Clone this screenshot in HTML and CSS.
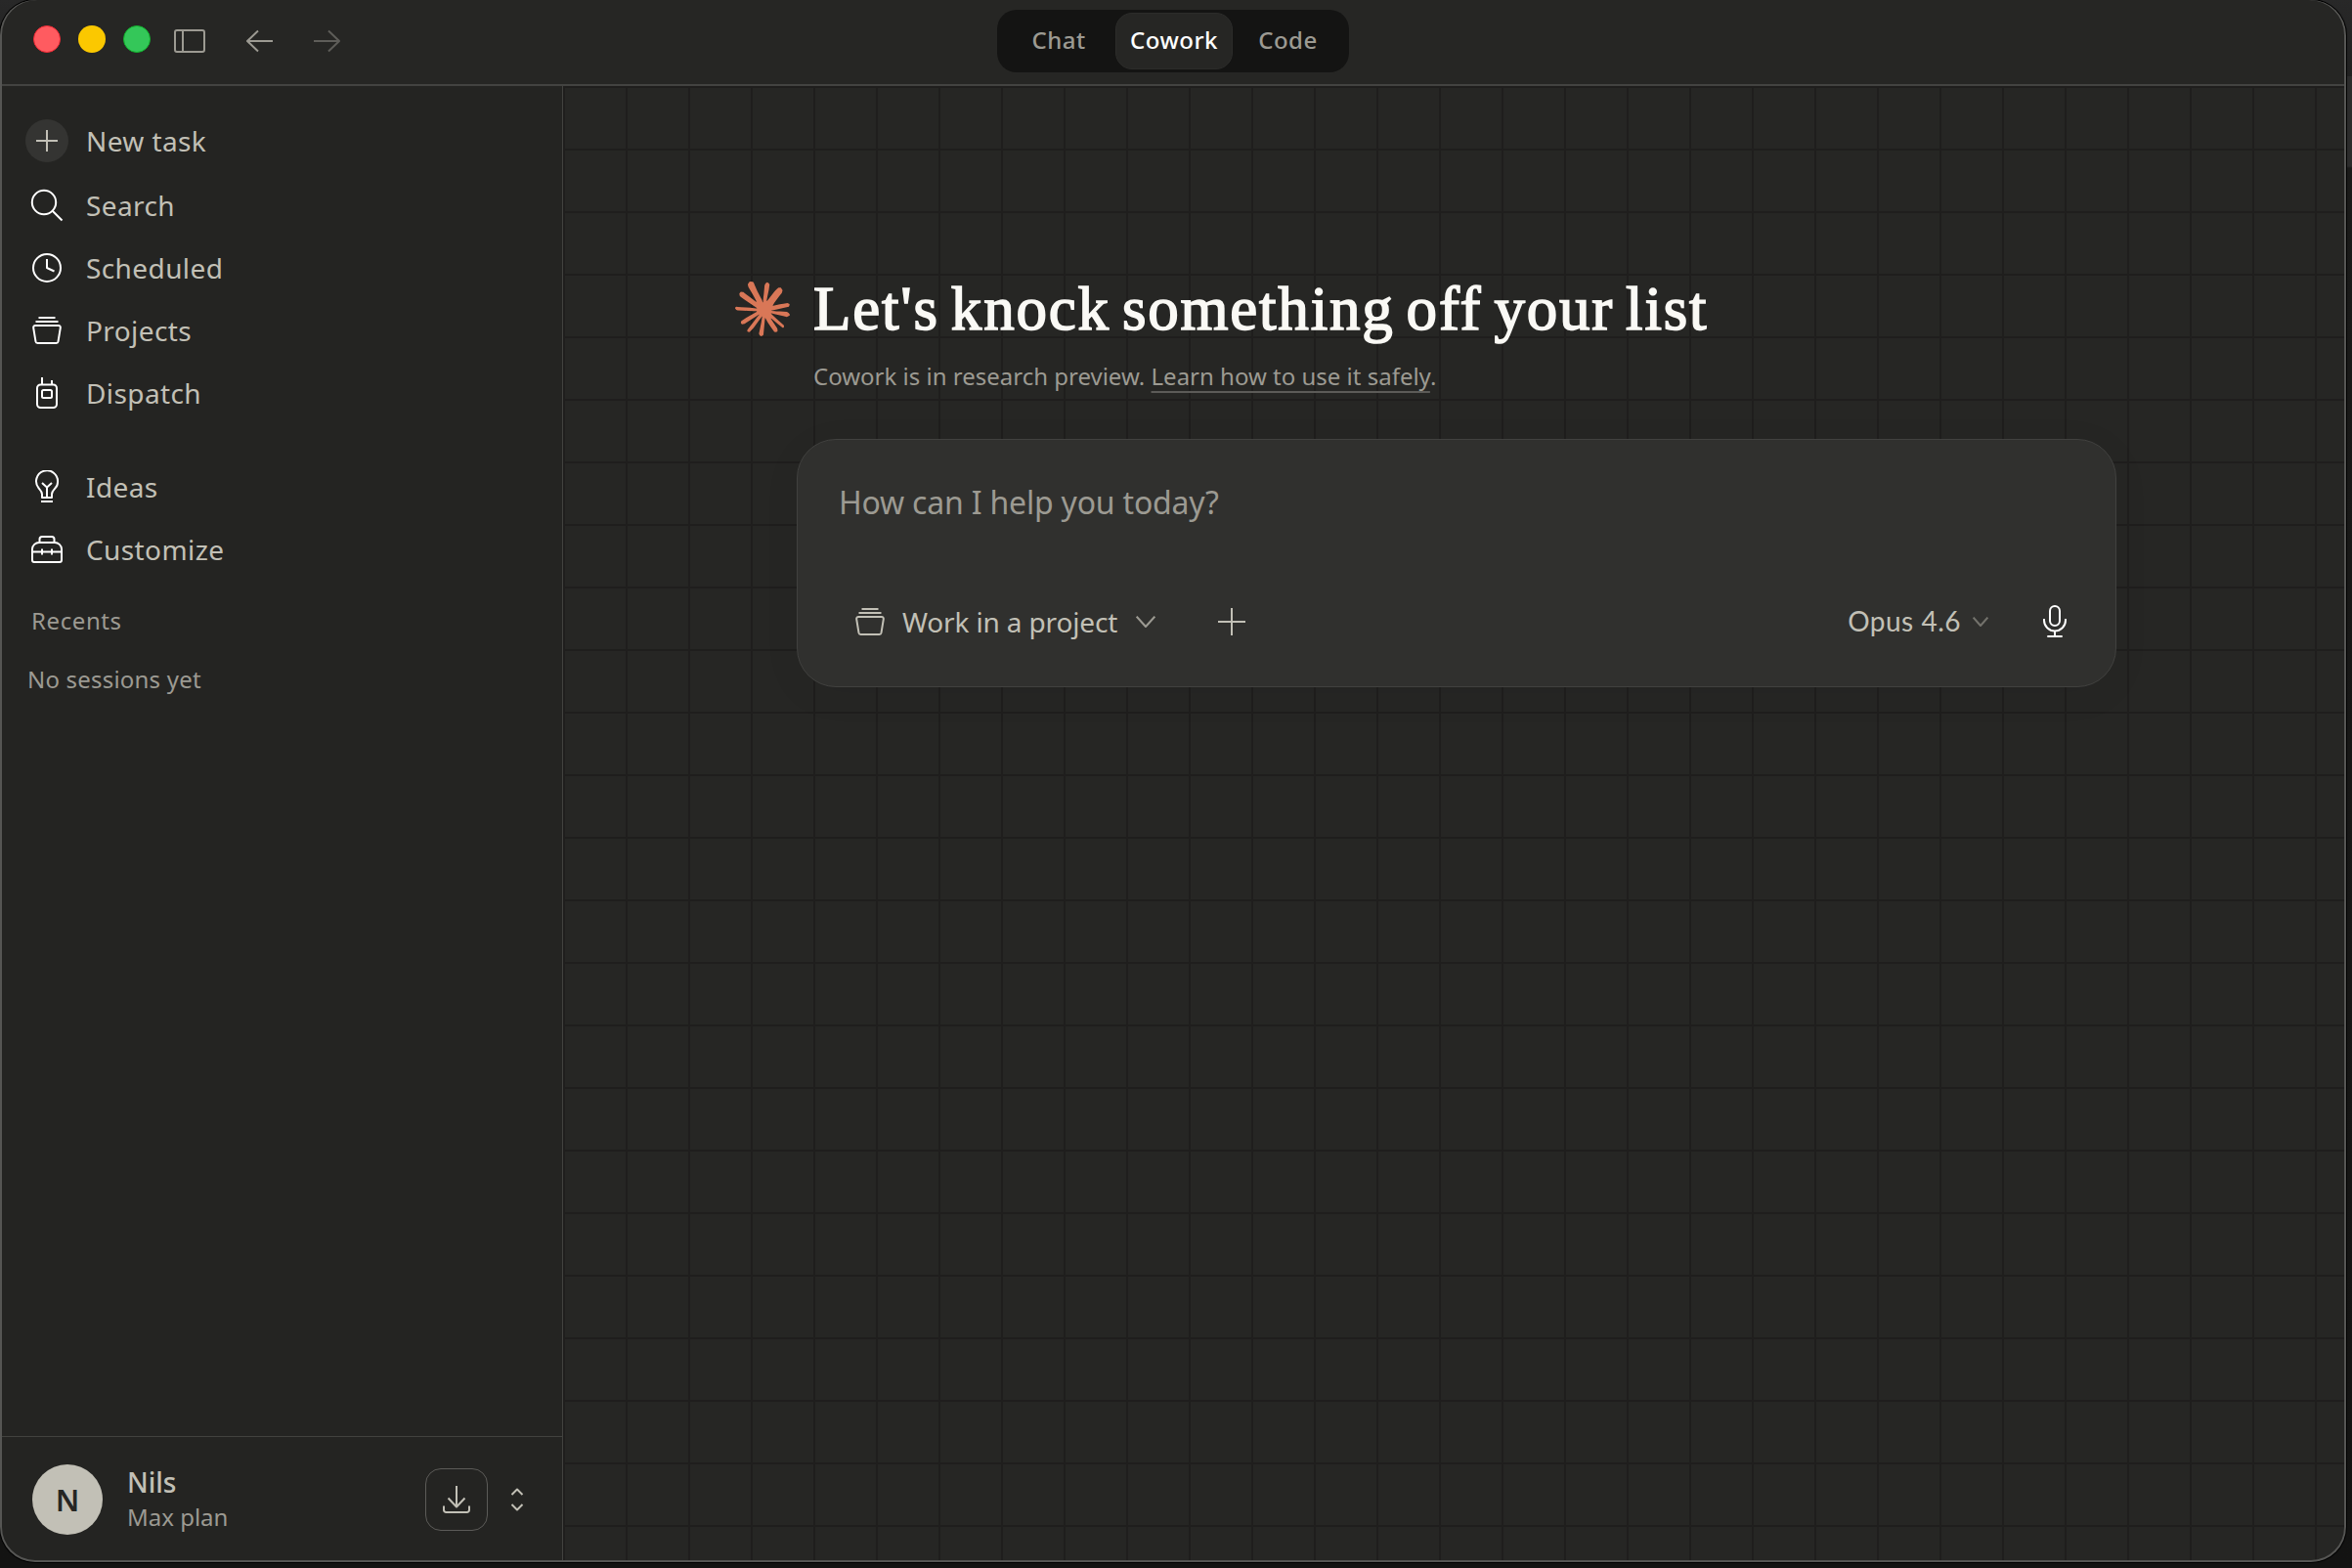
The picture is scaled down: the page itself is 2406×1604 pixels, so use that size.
FILE: index.html
```html
<!DOCTYPE html>
<html lang="en">
<head>
    <meta charset="UTF-8">
    <meta name="viewport" content="width=device-width, initial-scale=1.0">
    <title>Cowork</title>
    <link rel="stylesheet" href="styles.css">
</head>
<body>
    <div class="window">
        <header class="titlebar">
            <div class="lights">
                <span class="light red"></span>
                <span class="light yellow"></span>
                <span class="light green"></span>
            </div>
            <button class="icon-btn toggle" aria-label="Toggle sidebar">
                <svg width="32" height="24" viewBox="0 0 32 24"><rect x="1" y="1" width="30" height="22" rx="2"/><path d="M9 1v22"/></svg>
            </button>
            <button class="icon-btn back" aria-label="Back">
                <svg width="28" height="24" viewBox="0 0 28 24"><path d="M27 12H1M12 1.5L1 12l11 10.500"/></svg>
            </button>
            <button class="icon-btn forward" aria-label="Forward">
                <svg width="28" height="24" viewBox="0 0 28 24"><path d="M1 12h26M16 1.500L27 12 16 22.500"/></svg>
            </button>
            <nav class="tabs">
                <a class="tab chat">Chat</a>
                <a class="tab active">Cowork</a>
                <a class="tab code">Code</a>
            </nav>
        </header>

        <div class="body">
            <aside class="sidebar">
                <nav class="menu">
                    <a class="item new-task">
                        <span class="icon plus-circle"><svg width="22" height="22" viewBox="0 0 22 22"><path d="M11 0v22M0 11h22"/></svg></span>
                        <span>New task</span>
                    </a>
                    <a class="item">
                        <span class="icon"><svg width="34" height="34" viewBox="0 0 34 34"><circle cx="14" cy="14" r="12.200"/><path d="M22.700 22.700L32.500 32.500"/></svg></span>
                        <span>Search</span>
                    </a>
                    <a class="item">
                        <span class="icon"><svg width="32" height="32" viewBox="0 0 32 32"><circle cx="16" cy="16" r="14"/><path d="M16 7v9l7.500 3.500"/></svg></span>
                        <span>Scheduled</span>
                    </a>
                    <a class="item">
                        <span class="icon"><svg width="32" height="32" viewBox="0 0 32 32"><path d="M7.500 3h17M4.500 7h23M4.200 11h23.600a2 2 0 0 1 2 2.400l-2.300 14a2 2 0 0 1-2 1.600h-19a2 2 0 0 1-2-1.600l-2.300-14a2 2 0 0 1 2-2.400z"/></svg></span>
                        <span>Projects</span>
                    </a>
                    <a class="item">
                        <span class="icon"><svg width="32" height="32" viewBox="0 0 32 32"><path d="M11 0v7M21 3v4"/><rect x="6" y="7.500" width="20" height="23.500" rx="3.500"/><rect x="11" y="13" width="10" height="8" rx="1.500"/></svg></span>
                        <span>Dispatch</span>
                    </a>
                    <a class="item ideas">
                        <span class="icon"><svg width="32" height="34" viewBox="0 0 32 34"><path d="M11 28v-3.500c0-2.500-1.500-4-3.300-6A11 11 0 1 1 27 12.200c0 2.800-1 4.800-2.700 6.300-1.800 2-3.300 3.500-3.300 6V28zM10 32h12M11 13l5 4.500 5-4.500M16 17.500V28"/></svg></span>
                        <span>Ideas</span>
                    </a>
                    <a class="item">
                        <span class="icon"><svg width="34" height="32" viewBox="0 0 34 32"><path d="M9.500 8V5.500A2.500 2.500 0 0 1 12 3h10a2.500 2.500 0 0 1 2.500 2.500V8M9 9h16a7 7 0 0 1 7 6.500V27a2 2 0 0 1-2 2H4a2 2 0 0 1-2-2V15.500A7 7 0 0 1 9 9zM2 18.500h30M12 15.500v6M22 15.500v6"/></svg></span>
                        <span>Customize</span>
                    </a>
                </nav>
                <h2 class="recents">Recents</h2>
                <p class="empty">No sessions yet</p>

                <div class="account">
                    <div class="avatar">N</div>
                    <div class="who">
                        <div class="name">Nils</div>
                        <div class="plan">Max plan</div>
                    </div>
                    <button class="download" aria-label="Download">
                        <svg width="30" height="32" viewBox="0 0 30 32"><path d="M15 2v21M6.500 14.500L15 23.500l8.500-9M2 22.500v4.200A2.300 2.300 0 0 0 4.300 29h21.400a2.300 2.300 0 0 0 2.300-2.300v-4.200"/></svg>
                    </button>
                    <svg class="updown" width="14" height="24" viewBox="0 0 14 24"><path d="M1.500 7L7 1.500 12.500 7M1.500 17L7 22.500l5.500-5.500"/></svg>
                </div>
            </aside>

            <main class="main">
                <div class="hero">
                    <svg class="logo" width="56" height="56" viewBox="0 0 100 100"><path d="m19.600 66.500 19.700-11 .3-1-.3-.5h-1l-3.300-.2-11.200-.3L14 53l-9.500-.5-2.400-.5L0 49l.2-1.500 2-1.300 2.900.2 6.300.5 9.500.6 6.900.4L38 49.100h1.600l.2-.7-.5-.4-.4-.4L29 41l-10.600-7-5.600-4.100-3-2-1.500-2-.6-4.200 2.700-3 3.700.3.900.2 3.700 2.900 8 6.100L37 36l1.500 1.200.6-.4.1-.3-.7-1.100L33 25l-6-10.400-2.700-4.300-.7-2.600c-.3-1-.4-2-.4-3l3-4.200L28 0l4.200.6L33.800 2l2.600 6 4.100 9.300L47 29.900l2 3.800 1 3.400.3 1h.7v-.5l.5-7.200 1-8.700 1-11.200.3-3.200 1.600-3.800 3-2L61 2.600l2 2.900-.3 1.800-1.100 7.700L59 27.100l-1.500 8.200h.9l1-1.100 4.100-5.400 6.900-8.600 3-3.500L77 13l2.300-1.800h4.300l3.100 4.700-1.400 4.900-4.400 5.600-3.700 4.700-5.300 7.100-3.200 5.700.3.400h.7l12-2.600 6.400-1.100 7.600-1.300 3.500 1.600.4 1.600-1.400 3.400-8.200 2-9.600 2-14.300 3.300-.2.100.2.300 6.400.6 2.800.2h6.800l12.600 1 3.300 2 1.900 2.700-.3 2-5.100 2.600-6.800-1.600-16-3.800-5.400-1.300h-.8v.4l4.600 4.500 8.300 7.500L89 80.100l.5 2.400-1.300 2-1.400-.2-9.200-7-3.600-3-8-6.800h-.5v.7l1.800 2.700 9.800 14.700.5 4.500-.7 1.400-2.600 1-2.700-.6-5.800-8-6-9-4.700-8.200-.5.4-2.900 30.200-1.300 1.500-3 1.200-2.500-2-1.400-3 1.400-6.200 1.600-8 1.300-6.400 1.200-7.900.7-2.600v-.2H49L43 72l-9 12.300-7.200 7.600-1.700.7-3-1.500.3-2.800L24 86l10-12.800 6-7.900 4-4.600-.1-.5h-.3L17.200 77.400l-4.700.6-2-2 .2-3 1-1 8-5.500Z"/></svg>
                    <div class="headline">
                        <h1>Let's knock something off your list</h1>
                        <p class="preview">Cowork is in research preview. <a>Learn how to use it safely</a>.</p>
                    </div>
                </div>

                <div class="composer">
                    <div class="placeholder">How can I help you today?</div>
                    <div class="controls">
                        <svg class="project-icon" width="32" height="32" viewBox="0 0 32 32"><path d="M7.500 3h17M4.500 7h23M4.200 11h23.600a2 2 0 0 1 2 2.400l-2.300 14a2 2 0 0 1-2 1.600h-19a2 2 0 0 1-2-1.600l-2.300-14a2 2 0 0 1 2-2.400z"/></svg>
                        <span class="project">Work in a project</span>
                        <svg class="chevron" width="20" height="12" viewBox="0 0 20 12"><path d="M.7.700L10 11 19.300.700"/></svg>
                        <svg class="add" width="28" height="28" viewBox="0 0 28 28"><path d="M14 0v28M0 14h28"/></svg>
                        <span class="model">Opus 4.6</span>
                        <svg class="chevron-small" width="16" height="10" viewBox="0 0 16 10"><path d="M.6.600L8 9 15.400.600"/></svg>
                        <svg class="mic" width="26" height="34" viewBox="0 0 26 34"><rect x="8" y="1" width="10" height="20" rx="5"/><path d="M2 14v1.500a11 11 0 0 0 22 0V14M13 26.500V32M5.300 32h15.400"/></svg>
                    </div>
                </div>
            </main>
        </div>
    </div>
</body>
</html>
```
FILE: styles.css
```css
* {
    box-sizing: border-box;
}
body {
    margin: 0;
    height: 1604px;
    overflow: hidden;
    background: linear-gradient(#282828, #202020 78px, #2b2b2b 78px, #2b2b2b 170px, #1a1a19 172px, #131312);
    font-family: "Noto Sans", sans-serif;
    font-size: 28px;
    color: #c2c0b6;
}
h1, h2, p {
    margin: 0;
    font-weight: 400;
}
button {
    padding: 0;
    border: none;
    background: none;
    color: inherit;
}
svg {
    display: block;
    flex: none;
    fill: none;
    stroke: currentColor;
    stroke-width: 2;
    stroke-linejoin: round;
}

.window {
    position: relative;
    display: flex;
    flex-direction: column;
    width: 2400px;
    height: 1598px;
    border-radius: 36px;
    overflow: hidden;
    background: #262624;
    box-shadow: 0 0 0 1px #000;
}
/* light window edge, drawn over everything */
.window::after {
    content: '';
    position: absolute;
    inset: -2px 0 0 0;
    border: 2px solid #555553;
    border-radius: 38px 38px 36px 36px;
    pointer-events: none;
}

/* title bar */
.titlebar {
    position: relative;
    display: flex;
    align-items: center;
    height: 88px;
    padding: 0 0 2px 34px;
    border-bottom: 2px solid #434341;
}
.lights {
    display: flex;
    gap: 18px;
    margin-top: -4px;
}
.light {
    width: 28px;
    height: 28px;
    border-radius: 50%;
}
.red { background: #ff5b60; border: 1px solid #ee2a35; }
.yellow { background: #fbc800; }
.green { background: #34c759; border: 1px solid #12b02c; }
.icon-btn { color: #9c9a92; }
.toggle { margin-left: 24px; }
.back { margin-left: 42px; }
.forward { margin-left: 40px; color: #5e5d59; }
.tabs {
    position: absolute;
    left: 1020px;
    top: 10px;
    display: flex;
    width: 360px;
    height: 64px;
    padding: 3px;
    border-radius: 20px;
    background: #141413;
    font-size: 24px;
    font-weight: 500;
    letter-spacing: 0.5px;
    color: #9c9a92;
}
.tab {
    display: flex;
    align-items: center;
    justify-content: center;
    width: 118px;
    padding: 0 0 3px 2px;
}
.tab.active {
    width: 120px;
    padding-left: 0;
    border-radius: 17px;
    background: #262624;
    border: 1px solid #2c2c2a;
    color: #fff;
}
.tab.code {
    width: 116px;
    padding: 0 3px 3px 0;
}
.body {
    display: flex;
    flex: 1;
    min-height: 0;
}

/* sidebar */
.sidebar {
    display: flex;
    flex-direction: column;
    width: 576px;
    border-right: 1px solid #42423f;
    background: #242422;
}
.menu {
    padding: 23px 0 0 26px;
    letter-spacing: 0.4px;
}
.item {
    display: flex;
    align-items: center;
    gap: 18px;
    height: 64px;
}
.new-task {
    height: 66px;
    margin-bottom: 1px;
}
.ideas { margin-top: 32px; }
.icon {
    display: flex;
    align-items: center;
    justify-content: center;
    width: 44px;
    height: 44px;
    color: #fff;
}
.plus-circle {
    border-radius: 50%;
    background: #343432;
    color: #c2c0b6;
}
.recents {
    margin: 25px 0 0 32px;
    font-size: 24px;
    line-height: 32px;
    letter-spacing: 0.6px;
    color: #9c9a92;
}
.empty {
    margin: 28px 0 0 28px;
    font-size: 24px;
    line-height: 32px;
    letter-spacing: 0.2px;
    color: #9c9a92;
}
.account {
    display: flex;
    align-items: center;
    height: 129px;
    margin-top: auto;
    padding-left: 33px;
    border-top: 1px solid #42423f;
}
.avatar {
    width: 72px;
    height: 72px;
    border-radius: 50%;
    background: #c2c0b6;
    color: #262624;
    font-size: 31px;
    font-weight: 600;
    line-height: 72px;
    text-align: center;
}
.who {
    width: 305px;
    margin-left: 25px;
}
.name {
    font-weight: 500;
    line-height: 36px;
}
.plan {
    font-size: 24px;
    line-height: 36px;
    color: #9c9a92;
}
.download {
    display: flex;
    align-items: center;
    justify-content: center;
    width: 64px;
    height: 64px;
    border: 1px solid #5c5b58;
    border-radius: 16px;
}
.updown {
    margin-left: 23px;
}

/* main area */
.main {
    flex: 1;
    padding: 194px 235px 0 176px;
    background-color: #262624;
    background-image:
        linear-gradient(#1f1e1d 2px, transparent 2px),
        linear-gradient(90deg, #1f1e1d 2px, transparent 2px);
    background-size: 64px 64px;
}
.hero {
    display: flex;
    gap: 24px;
}
.logo {
    margin-top: 6px;
    fill: #d97757;
    stroke: none;
}
h1 {
    height: 68px;
    font-family: "Liberation Serif", serif;
    font-size: 63px;
    line-height: 68px;
    letter-spacing: 1.8px;
    word-spacing: -5.5px;
    white-space: nowrap;
    color: #faf9f5;
    -webkit-text-stroke: 1.6px #faf9f5;
}
.preview {
    margin-top: 19px;
    font-size: 24px;
    line-height: 32px;
    color: #9c9a92;
}
.preview a {
    text-decoration: underline;
    text-decoration-color: #5c5b58;
    text-decoration-thickness: 2px;
    text-decoration-skip-ink: none;
    text-underline-offset: 6px;
}
.composer {
    height: 254px;
    margin: 48px 0 0 63px;
    padding: 40px 49px 0 42px;
    border: 1px solid #41413f;
    border-radius: 40px;
    background: #30302e;
    box-shadow: 0 8px 40px rgba(0,0,0,0.05);
}
.placeholder {
    font-size: 32px;
    line-height: 48px;
    letter-spacing: -0.2px;
    color: #9c9a92;
}
.controls {
    display: flex;
    align-items: center;
    height: 64px;
    margin-top: 66px;
    padding-left: 16px;
}
.project {
    width: 222px;
    margin-left: 17px;
    letter-spacing: -0.15px;
    white-space: nowrap;
}
.chevron { margin-left: 17px; color: #9c9a92; }
.add { margin-left: 64px; }
.model {
    margin: -2px 0 0 auto;
    font-family: Lato, sans-serif;
    letter-spacing: 0.5px;
}
.chevron-small { margin-left: 12px; color: #73726c; }
.mic { margin-left: 55px; color: #fff; }
```
